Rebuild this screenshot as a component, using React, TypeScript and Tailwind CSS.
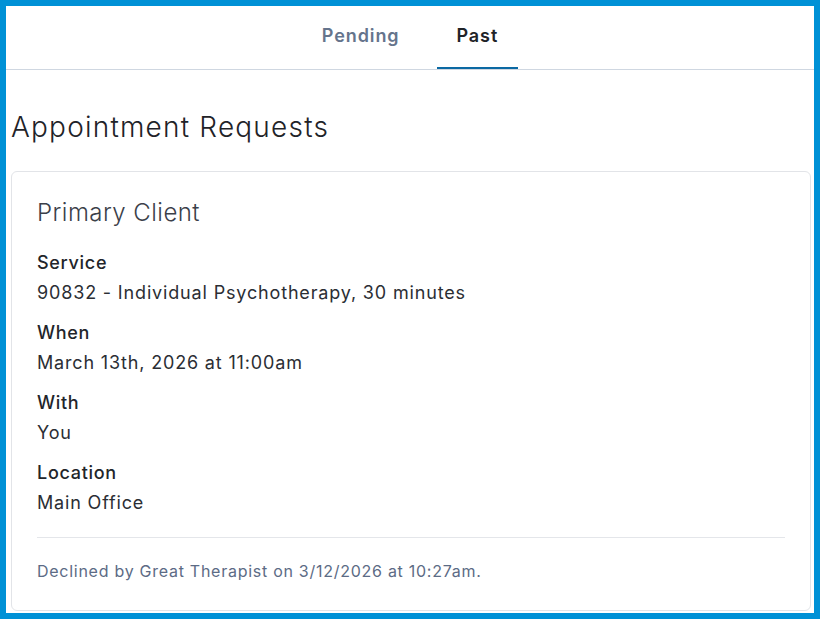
import React from "react";

const fields = [
  { label: "Service", value: "90832 - Individual Psychotherapy, 30 minutes" },
  { label: "When", value: "March 13th, 2026 at 11:00am" },
  { label: "With", value: "You" },
  { label: "Location", value: "Main Office" },
];

export default function App() {
  return (
    <div
      className="w-[820px] h-[619px] border-[6px] border-[#0091d6] bg-white overflow-hidden text-[#25282d]"
      style={{ fontFamily: "Inter, 'Noto Sans', sans-serif" }}
    >
      <div className="h-[64px] border-b border-[#cfd7e1] flex justify-center gap-[17px]">
        <div className="px-5 pb-[2px] flex items-center text-[18px] tracking-[0.9px] font-semibold text-[#65748c] border-b-2 border-transparent">
          Pending
        </div>
        <div className="px-5 pb-[2px] flex items-center text-[18px] tracking-[0.9px] font-semibold text-[#1f2328] border-b-2 border-[#0b69a3]">
          Past
        </div>
      </div>
      <h1 className="mt-[39px] ml-[5px] text-[28px] leading-[36px] tracking-[1.2px] font-light text-[#1f2328]">
        Appointment Requests
      </h1>
      <div className="mt-[26px] ml-[5px] w-[800px] border border-[#e2e4e8] rounded-md px-[25px] pt-[25px] pb-[27px]">
        <div className="text-[24px] leading-[32px] tracking-[0.45px] font-light text-[#3b4049]">Primary Client</div>
        <div className="mt-[19px] flex flex-col gap-[10px]">
          {fields.map((f) => (
            <div key={f.label}>
              <div className="text-[18px] leading-[30px] tracking-[0.7px] font-medium text-[#22252a]">{f.label}</div>
              <div className="text-[18px] leading-[30px] tracking-[0.84px] text-[#2b2e34]">{f.value}</div>
            </div>
          ))}
        </div>
        <div className="mt-[19px] border-t border-[#e4e6ea]" />
        <div className="mt-[21px] text-[16px] leading-[24px] tracking-[0.73px] text-[#5c6b85]">
          Declined by Great Therapist on 3/12/2026 at 10:27am.
        </div>
      </div>
    </div>
  );
}
